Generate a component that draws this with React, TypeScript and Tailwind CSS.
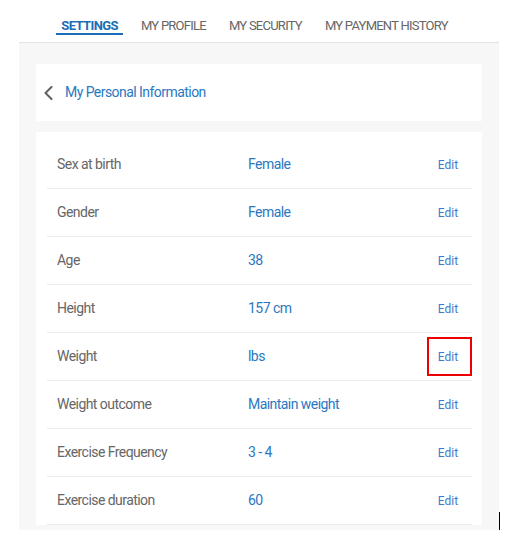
const tabs = ["SETTINGS", "MY PROFILE", "MY SECURITY", "MY PAYMENT HISTORY"];

const rows = [
  { label: "Sex at birth", value: "Female" },
  { label: "Gender", value: "Female" },
  { label: "Age", value: "38" },
  { label: "Height", value: "157 cm" },
  { label: "Weight", value: "lbs", highlight: true },
  { label: "Weight outcome", value: "Maintain weight" },
  { label: "Exercise Frequency", value: "3 - 4" },
  { label: "Exercise duration", value: "60" },
];

export default function App() {
  return (
    <div className="relative w-[509px] h-[546px] bg-white overflow-hidden" style={{ fontFamily: "Roboto, 'Liberation Sans', sans-serif" }}>
      <nav className="h-[42px] flex items-center justify-center gap-[23px] pt-[9px]">
        {tabs.map((t, i) => (
          <div key={t} className="relative h-full flex items-center">
            <span className={i === 0 ? "text-[13px] font-bold text-[#1b6db8] tracking-[-0.6px]" : "text-[13px] text-[#666] tracking-[-0.75px]"}>{t}</span>
            {i === 0 && <span className="absolute left-[-5px] right-[-5px] top-[24px] h-[2px] bg-[#1b6db8]" />}
          </div>
        ))}
      </nav>
      <div className="ml-[19px] w-[480px] h-px bg-[#e4e4e4]" />

      <div className="ml-[19px] w-[480px] h-[487px] bg-[#f7f7f7] px-[17px] pt-[21px] overflow-hidden">
        <div className="h-[57px] bg-white flex items-center pl-[8px] gap-[12px]">
          <svg width="9" height="14" viewBox="0 0 9 14" fill="none" className="mt-[1px]">
            <polyline points="7.5,1 1.5,7 7.5,13" stroke="#5f5f5f" strokeWidth="2" strokeLinecap="round" strokeLinejoin="round" />
          </svg>
          <span className="text-[14px] text-[#2a78c2] tracking-[-0.55px]">My Personal Information</span>
        </div>

        <div className="mt-[11px] bg-white pt-[9px] pl-[11px] pr-[10px]">
          {rows.map((r) => (
            <div key={r.label} className="h-[48px] flex items-center border-b border-[#ebebeb] text-[14px] tracking-[-0.55px]">
              <span className="w-[201px] pl-[10px] text-[#666]">{r.label}</span>
              <span className="flex-1 text-[#2a78c2]">{r.value}</span>
              <span
                className={
                  r.highlight
                    ? "w-[45px] h-[39px] flex items-center justify-center pr-[3px] border-2 border-[#ee0000] text-[12px] tracking-normal text-[#3c7ccb]"
                    : "w-[45px] h-[39px] flex items-center justify-center pr-[3px] text-[12px] tracking-normal text-[#3c7ccb]"
                }
              >
                Edit
              </span>
            </div>
          ))}
        </div>
      </div>
      <div className="absolute left-[499px] top-[512px] w-px h-[18px] bg-black" />
    </div>
  );
}
